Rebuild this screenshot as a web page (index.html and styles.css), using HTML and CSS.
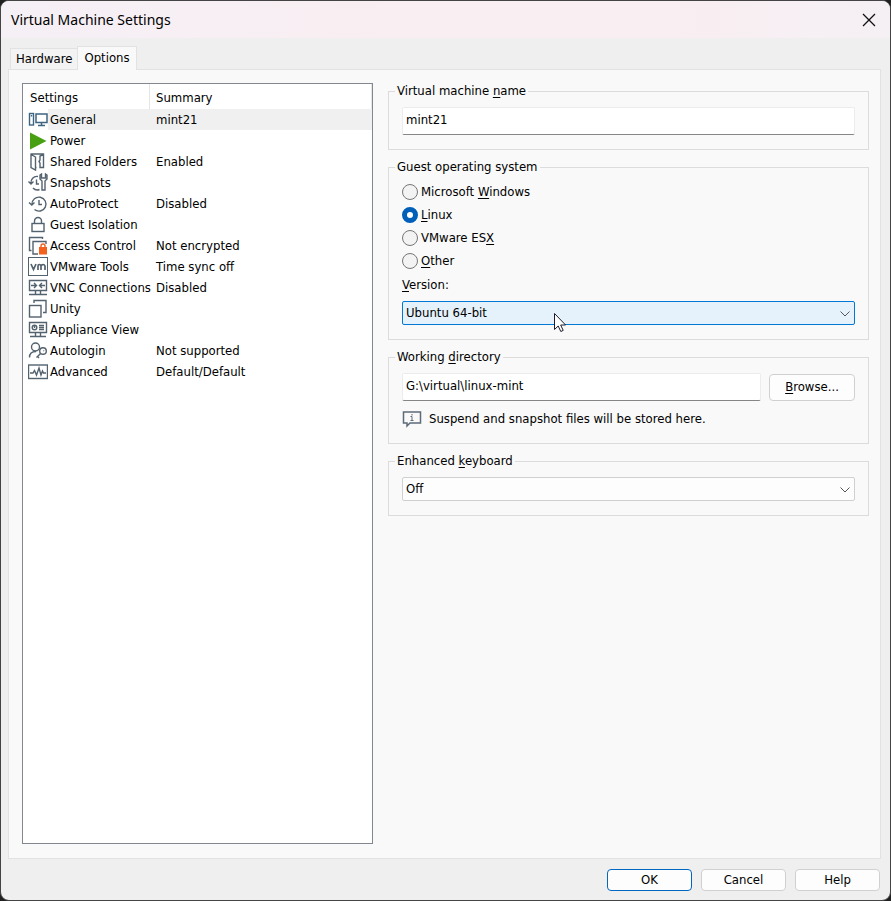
FILE: index.html
```html
<!DOCTYPE html>
<html lang="en">
<head>
  <meta charset="UTF-8">
  <meta name="viewport" content="width=device-width, initial-scale=1.0">
  <title>Virtual Machine Settings</title>
  <link rel="stylesheet" href="styles.css">
</head>
<body>
  <div class="window">
    <header class="titlebar">
      <h1>Virtual Machine Settings</h1>
      <button type="button" class="close" aria-label="Close">
        <svg width="14" height="14" viewBox="0 0 14 14"><path d="M1 1l12 12M13 1L1 13" fill="none" stroke="#111" stroke-width="1.3"/></svg>
      </button>
    </header>

    <div class="tabs" role="tablist">
      <button type="button" class="tab" role="tab">Hardware</button>
      <button type="button" class="tab active" role="tab" aria-selected="true">Options</button>
    </div>

    <main class="panel">
      <div class="list">
        <table>
          <colgroup><col class="col-icon"><col class="col-name"><col></colgroup>
          <thead>
            <tr><th colspan="2">Settings</th><th class="summary">Summary</th></tr>
          </thead>
          <tbody>
            <tr class="selected">
              <td class="icon"><svg viewBox="0 0 20 20"><g stroke="#3f6482"><rect x="1.5" y="3.5" width="4" height="11.5"/><path d="M3.5 5v1.500"/><rect x="8" y="4" width="11" height="8.500" stroke-width="1.500"/><path d="M13.500 12v3M10 15.500h7" stroke-width="1.500"/></g></svg></td>
              <td>General</td><td>mint21</td>
            </tr>
            <tr>
              <td class="icon"><svg viewBox="0 0 20 20"><path d="M2 1.500l16.500 8.500L2 18.500z" fill="#47a012" stroke="none"/></svg></td>
              <td>Power</td><td></td>
            </tr>
            <tr>
              <td class="icon"><svg viewBox="0 0 20 20"><path d="M7.500 5L3 2.500v13l4.500 2.500zM3 2h12.500v13.500h-3.500V11l-1-1.500 1-1.500V4l3.500-1.500M7.500 15.500h1"/></svg></td>
              <td>Shared Folders</td><td>Enabled</td>
            </tr>
            <tr>
              <td class="icon"><svg viewBox="0 0 20 20"><path d="M10 3.500A6 6 0 0 0 3 10.500M5 15a6 6 0 0 0 6.500 1.500M.5 8.500L3 11l2.500-2.500M8.500 6.500V11H11"/><path d="M12 2v4l2 2v9h3V8l2-2V2l-1.500-1v4h-4V1z"/></svg></td>
              <td>Snapshots</td><td></td>
            </tr>
            <tr>
              <td class="icon"><svg viewBox="0 0 20 20"><path d="M4 10.500A7 7 0 1 1 6.500 15.500M1 8.500L3.800 11 6.500 8.500M11 6v4.500H14"/></svg></td>
              <td>AutoProtect</td><td>Disabled</td>
            </tr>
            <tr>
              <td class="icon"><svg viewBox="0 0 20 20"><rect x="4" y="8.500" width="12" height="8"/><path d="M6.500 8.500V6a3.500 3.500 0 0 1 7 0v2.500"/></svg></td>
              <td>Guest Isolation</td><td></td>
            </tr>
            <tr>
              <td class="icon"><svg viewBox="0 0 20 20"><path d="M3.500 14.500H1.500v-13h13V3M10 18H5V5.500h13V8"/><rect x="11" y="11" width="8" height="7.500" fill="#f4611c" stroke="none"/><path d="M13 11.500V10a2 2 0 0 1 4 0v1.500" stroke="#f4611c"/></svg></td>
              <td>Access Control</td><td>Not encrypted</td>
            </tr>
            <tr>
              <td class="icon"><svg viewBox="0 0 20 20"><rect x="0.500" y="0.500" width="19" height="18" stroke-width="1"/><path d="M3 7l2.500 5.500L8 7M10 13V9q0-1.500 1.300-1.500t1.700 1.500v4M13.500 9q0-1.500 1.500-1.500t2 1.500v4" stroke-width="1.700"/></svg></td>
              <td>VMware Tools</td><td>Time sync off</td>
            </tr>
            <tr>
              <td class="icon"><svg viewBox="0 0 20 20"><path d="M1.500 2.500h17v10h-17zM1 16.500h18M7.500 13v3M12.500 13v3M3 7.500h5M17 7.500h-5M6 5l2.500 2.500L6 10M14 5l-2.500 2.500L14 10"/></svg></td>
              <td>VNC Connections</td><td>Disabled</td>
            </tr>
            <tr>
              <td class="icon"><svg viewBox="0 0 20 20"><rect x="1.500" y="6.500" width="11.500" height="11.500"/><path d="M6 4V1.500h12v12h-3"/></svg></td>
              <td>Unity</td><td></td>
            </tr>
            <tr>
              <td class="icon"><svg viewBox="0 0 20 20"><path d="M1.500 2.500h17v10h-17zM2 16.500h16M7.500 13v3M12.500 13v3M11 5.500h5M11 7.500h5M11 9.500h5"/><circle cx="6.500" cy="7.500" r="2.300"/><path d="M6.500 5v3"/></svg></td>
              <td>Appliance View</td><td></td>
            </tr>
            <tr>
              <td class="icon"><svg viewBox="0 0 20 20"><circle cx="7.500" cy="6" r="4"/><path d="M1.500 16.500C1.500 12.500 4 10.500 8 10.500"/><circle cx="15" cy="10" r="3.300"/><path d="M12.800 12.300L8.500 16.500M9.500 15.500l1.500 1.500M15.500 9.500l.5.5"/></svg></td>
              <td>Autologin</td><td>Not supported</td>
            </tr>
            <tr>
              <td class="icon"><svg viewBox="0 0 20 20"><rect x="0.500" y="3" width="19" height="13.500"/><path d="M2 11h3l1.500-2.500L8.500 13 11 6l2 7 1.500-4 1 2H18"/></svg></td>
              <td>Advanced</td><td>Default/Default</td>
            </tr>
          </tbody>
        </table>
      </div>

      <form class="options" id="options">
        <fieldset>
          <legend><label for="vmname">Virtual machine <u>n</u>ame</label></legend>
          <input type="text" id="vmname" value="mint21">
        </fieldset>

        <fieldset>
          <legend>Guest operating system</legend>
          <div class="radios">
            <label><input type="radio" name="os"><span>Microsoft <u>W</u>indows</span></label>
            <label><input type="radio" name="os" checked><span><u>L</u>inux</span></label>
            <label><input type="radio" name="os"><span>VMware ES<u>X</u></span></label>
            <label><input type="radio" name="os"><span><u>O</u>ther</span></label>
          </div>
          <label class="version" for="version"><u>V</u>ersion:</label>
          <div class="combo hot">
            <select id="version"><option>Ubuntu 64-bit</option></select>
            <svg class="chevron" viewBox="0 0 10 6"><path d="M.5.5L5 5 9.500.5"/></svg>
            <svg class="cursor" viewBox="0 0 12 19"><path d="M.5.5v16l3.700-3.500 2.600 5.500 2.400-1.100-2.500-5.400h4.900z"/></svg>
          </div>
        </fieldset>

        <fieldset>
          <legend><label for="workdir">Working <u>d</u>irectory</label></legend>
          <div class="path">
            <input type="text" id="workdir" value="G:\virtual\linux-mint">
            <button type="button" class="btn browse"><span><u>B</u>rowse...</span></button>
          </div>
          <p class="hint">
            <svg viewBox="0 0 20 18"><path d="M1.500 2h17v11H8l-3 3v-3H1.500z" stroke-width="1.500"/><path d="M10 4v1.500M8.500 6.500H10V10.500M8.500 10.500h3"/></svg>
            Suspend and snapshot files will be stored here.
          </p>
        </fieldset>

        <fieldset>
          <legend><label for="keyboard">Enhanced <u>k</u>eyboard</label></legend>
          <div class="combo">
            <select id="keyboard"><option>Off</option></select>
            <svg class="chevron" viewBox="0 0 10 6"><path d="M.5.5L5 5 9.500.5"/></svg>
          </div>
        </fieldset>
      </form>
    </main>

    <footer class="footer">
      <button type="submit" form="options" class="btn default">OK</button>
      <button type="button" class="btn">Cancel</button>
      <button type="button" class="btn">Help</button>
    </footer>
  </div>
</body>
</html>
```
FILE: styles.css
```css
* {
  box-sizing: border-box;
}
body {
  margin: 0;
  background: #202020;
  color: #000;
}
body, button, input, select {
  font-family: "DejaVu Sans Condensed", "Noto Sans", sans-serif;
  font-size: 13px;
  line-height: 18px;
}
.window {
  display: flex;
  flex-direction: column;
  min-height: 100vh;
  border: 1px solid #444;
  border-radius: 9px;
  background: #efefef;
  overflow: hidden;
}
.titlebar {
  display: flex;
  justify-content: space-between;
  align-items: center;
  height: 37px;
  padding: 0 14px 0 10px;
  background: linear-gradient(90deg, #f5f0f6, #f9eef2 45%, #f9eef2 75%, #f5f0f4);
}
.titlebar h1 {
  margin: 0;
  font: 14px "Noto Sans", sans-serif;
}
.close {
  display: flex;
  padding: 0;
  border: 0;
  background: none;
}

/* tabs overlap the panel border by one pixel */
.tabs {
  display: flex;
  align-items: flex-end;
  margin: 8px 9px -1px;
  z-index: 1;
}
.tab {
  height: 22px;
  padding: 0 5px;
  border: 1px solid #e2e2e2;
  background: #f3f3f3;
}
.tab.active {
  height: 24px;
  padding: 0 6px 2px;
  margin-left: -1px;
  border-bottom: 0;
  background: #f9f9f9;
}
.panel {
  flex: 1;
  display: grid;
  grid-template-columns: 351fr 481fr;
  gap: 15px;
  margin: 0 9px 0 7px;
  padding: 12px 11px 14px 13px;
  border: 1px solid #e2e2e2;
  background: #f9f9f9;
}
.list {
  margin-top: 1px;
  border: 1px solid #828790;
  background: #fff;
}
.list table {
  width: 100%;
  table-layout: fixed;
  border-collapse: separate;
  border-spacing: 0;
}
.col-icon {
  width: 25px;
}
.col-name {
  width: 102px;
}
.list th {
  height: 25px;
  padding: 2px 7px 0;
  border-right: 1px solid #e5e5e5;
  font-weight: normal;
  text-align: left;
}
.list .summary {
  padding-left: 6px;
}
.list td {
  height: 21px;
  padding: 0 0 0 6px;
  white-space: nowrap;
}
.list td.icon {
  padding: 0 0 0 5px;
}
.list td.icon + td {
  padding-left: 2px;
}
.list .selected td:not(.icon) {
  background: #f0f0f0;
}
.icon svg {
  display: block;
  width: 20px;
  height: 20px;
  fill: none;
  stroke: #53626f;
  stroke-width: 1.4;
}

.options {
  display: flex;
  flex-direction: column;
  gap: 8px;
}
fieldset {
  min-width: 0;
  margin: 0;
  padding: 7px 13px 14px;
  border: 1px solid #dcdcdc;
}
legend {
  height: 18px;
  margin-left: -7px;
  padding: 0 2px;
}
u {
  text-underline-offset: 2px;
}
input[type="text"] {
  display: block;
  width: 100%;
  height: 28px;
  padding: 0 3px 4px;
  border: 1px solid #ececec;
  border-bottom-color: #868686;
  border-radius: 2px;
  background: #fff;
}
.radios {
  display: flex;
  flex-direction: column;
  gap: 6px;
}
.radios label {
  display: flex;
  align-items: center;
  gap: 3px;
  height: 17px;
}
.radios input {
  appearance: none;
  width: 16px;
  height: 16px;
  margin: 0;
  border: 1px solid #767676;
  border-radius: 50%;
  background: #f3f3f3;
}
.radios input:checked {
  border: 5px solid #005fb8;
  background: #fff;
}
.version {
  display: block;
  margin: 7px 0;
}
.combo {
  position: relative;
}
.combo select {
  display: block;
  appearance: none;
  width: 100%;
  height: 24px;
  padding: 0 3px;
  border: 1px solid #d0d0d0;
  border-radius: 2px;
  background: #fdfdfd;
  color: #000;
}
.combo.hot select {
  border-color: #0078d4;
  background: #e5f1fb;
}
.chevron {
  position: absolute;
  top: 10px;
  right: 5px;
  width: 10px;
  height: 6px;
  fill: none;
  stroke: #555;
}
.cursor {
  position: absolute;
  top: 12px;
  left: 152px;
  width: 12px;
  height: 19px;
  fill: #fff;
  stroke: #1c1c2c;
}
.path {
  display: flex;
  align-items: center;
  gap: 8px;
}
.path input {
  flex: 1;
  min-width: 0;
}
.hint {
  display: flex;
  align-items: center;
  gap: 7px;
  height: 20px;
  margin: 8px 0 0;
}
.hint svg {
  flex: none;
  width: 20px;
  height: 18px;
  fill: none;
  stroke: #5d6b78;
}

.btn {
  width: 85px;
  height: 22px;
  padding: 0;
  border: 1px solid #d0d0d0;
  border-radius: 4px;
  background: #fdfdfd;
  color: #000;
}
.btn.browse {
  width: 86px;
  height: 27px;
}
.btn.default {
  border-color: #0067c0;
}
.footer {
  display: flex;
  justify-content: flex-end;
  gap: 9px;
  padding: 10px 10px 9px;
}
```
